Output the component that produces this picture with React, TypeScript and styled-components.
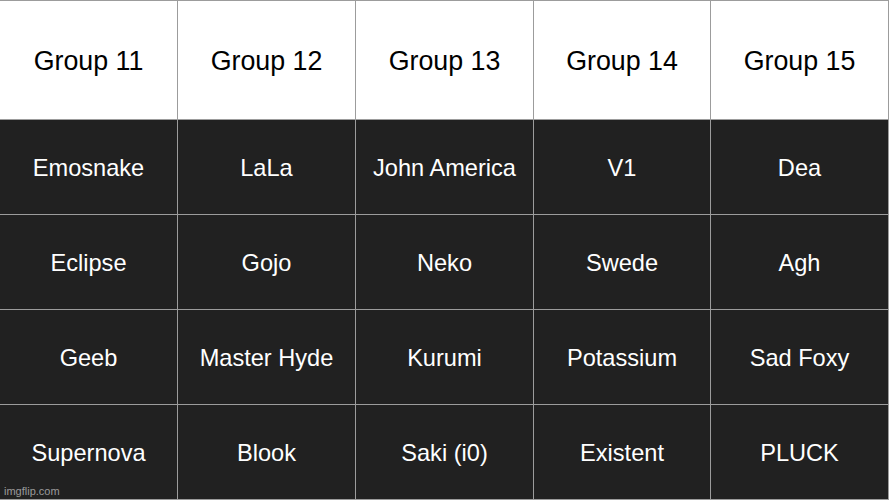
import React from "react";
import styled, { createGlobalStyle } from "styled-components";

const Global = createGlobalStyle`
  html, body { margin: 0; padding: 0; background: #ffffff; }
  body { font-family: "Liberation Sans", Arial, sans-serif; }
`;

const Board = styled.div`
  position: relative;
  width: 889px;
  height: 500px;
  box-sizing: border-box;
  display: grid;
  grid-template-columns: 177px 177px 177px 176px 177px;
  grid-template-rows: 118px repeat(4, 94px);
  gap: 1px;
  padding: 1px 1px 1px 0;
  background: #9c9c9c;
  overflow: hidden;
`;

const HeaderCell = styled.div`
  background: #ffffff;
  color: #000000;
  font-size: 26.8px;
  display: flex;
  align-items: center;
  justify-content: center;
  padding-top: 2px;
  box-sizing: border-box;
`;

const Cell = styled.div`
  background: #212121;
  color: #ffffff;
  font-size: 23.6px;
  display: flex;
  align-items: center;
  justify-content: center;
  padding-top: 2px;
  box-sizing: border-box;
  white-space: nowrap;
`;

const Watermark = styled.div`
  position: absolute;
  left: 4px;
  bottom: 3px;
  font-size: 11px;
  color: rgba(255, 255, 255, 0.55);
  font-family: "Liberation Sans", Arial, sans-serif;
`;

const headers = ["Group 11", "Group 12", "Group 13", "Group 14", "Group 15"];
const rows = [
  ["Emosnake", "LaLa", "John America", "V1", "Dea"],
  ["Eclipse", "Gojo", "Neko", "Swede", "Agh"],
  ["Geeb", "Master Hyde", "Kurumi", "Potassium", "Sad Foxy"],
  ["Supernova", "Blook", "Saki (i0)", "Existent", "PLUCK"],
];

export default function App() {
  return (
    <>
      <Global />
      <Board>
        {headers.map((h) => (
          <HeaderCell key={h}>{h}</HeaderCell>
        ))}
        {rows.flat().map((t, i) => (
          <Cell key={i}>{t}</Cell>
        ))}
        <Watermark>imgflip.com</Watermark>
      </Board>
    </>
  );
}
